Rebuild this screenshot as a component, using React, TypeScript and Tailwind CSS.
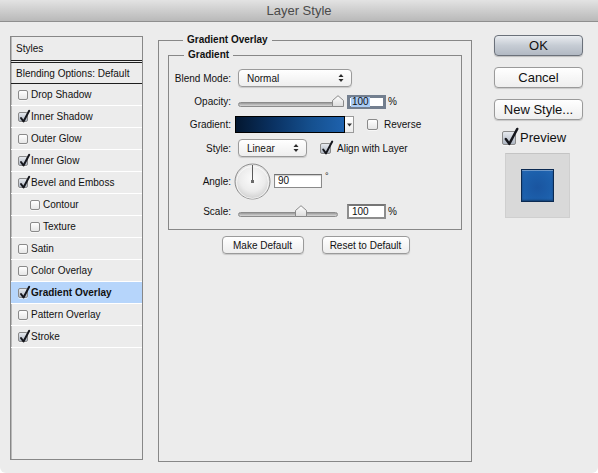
import React from "react";

function CheckMark({ size }: { size: number }) {
  const s = size;
  return (
    <svg
      className="absolute left-0 top-0 overflow-visible"
      width={s}
      height={s}
      viewBox={`0 0 ${s} ${s}`}
    >
      <path
        d={`M${s * 0.2} ${s * 0.5} L${s * 0.45} ${s * 0.85} L${s * 1.02} ${-s * 0.22}`}
        fill="none"
        stroke="#15161c"
        strokeWidth={s > 12 ? 2.4 : 2}
        strokeLinecap="round"
        strokeLinejoin="round"
      />
    </svg>
  );
}

function Box({ checked, size }: { checked: boolean; size: number }) {
  const base =
    "relative inline-block shrink-0 rounded-[2px] border border-[#8a8a8a] shadow-[0_1px_0_rgba(255,255,255,0.6)]";
  const fill = checked
    ? "bg-linear-to-b from-[#e6e9ee] to-[#aeb6c2] border-[#6f7580]"
    : "bg-linear-to-b from-[#ffffff] to-[#e6e6e6]";
  const dim =
    size === 10 ? "w-[10px] h-[10px]" : size === 11 ? "w-[11px] h-[11px]" : "w-[14px] h-[14px]";
  return (
    <span className={`${base} ${fill} ${dim}`}>
      {checked && <CheckMark size={size} />}
    </span>
  );
}

function UpDown() {
  return (
    <svg width="6" height="10" viewBox="0 0 6 10" className="shrink-0">
      <path d="M0.5 4 L3 1 L5.5 4 Z" fill="#2a2a2a" />
      <path d="M0.5 6 L3 9 L5.5 6 Z" fill="#2a2a2a" />
    </svg>
  );
}

function Popup({ text, w }: { text: string; w: "lg" | "sm" }) {
  return (
    <div
      className={`${w === "lg" ? "w-[114px]" : "w-[69px]"} h-[18px] ml-[7px] flex items-center justify-between pl-[8px] pr-[7px] rounded-[4px] border border-[#9a9a9a] bg-linear-to-b from-[#ffffff] to-[#eeeeee] shadow-[0_1px_1px_rgba(0,0,0,0.15)] text-[10px] text-[#111]`}
    >
      <span>{text}</span>
      <UpDown />
    </div>
  );
}

function Slider({ pos }: { pos: "end" | "mid" }) {
  return (
    <div className="relative ml-[7px] w-[100px] h-[15px] shrink-0">
      <div className="absolute left-0 right-0 top-[8px] h-[5px] rounded-full border border-[#8c8c8c] bg-linear-to-b from-[#9a9a9a] to-[#d8d8d8]" />
      <svg
        width="12"
        height="12"
        viewBox="0 0 12 12"
        className={`absolute top-[1px] ${pos === "end" ? "left-[94px]" : "left-[57px]"}`}
      >
        <defs>
          <linearGradient id={`th-${pos}`} x1="0" y1="0" x2="0" y2="1">
            <stop offset="0" stopColor="#ffffff" />
            <stop offset="1" stopColor="#dcdcdc" />
          </linearGradient>
        </defs>
        <path
          d="M0.5 11.5 L0.5 5.5 L6 0.7 L11.5 5.5 L11.5 11.5 Z"
          fill={`url(#th-${pos})`}
          stroke="#8a8a8a"
          strokeWidth="1"
        />
      </svg>
    </div>
  );
}

function Label({ children }: { children: React.ReactNode }) {
  return <div className="w-[62px] shrink-0 text-right text-[10px] text-[#111]">{children}</div>;
}

function Dial() {
  return (
    <svg width="37" height="37" viewBox="0 0 37 37" className="ml-[3px] shrink-0">
      <defs>
        <radialGradient id="dialg" cx="0.5" cy="0.42" r="0.6">
          <stop offset="0" stopColor="#fbfbfb" />
          <stop offset="0.6" stopColor="#ececec" />
          <stop offset="1" stopColor="#cdcdcd" />
        </radialGradient>
      </defs>
      <circle cx="18.5" cy="18.5" r="17.5" fill="url(#dialg)" stroke="#8e8e8e" strokeWidth="1" />
      <circle cx="18.5" cy="19.5" r="16" fill="none" stroke="rgba(255,255,255,0.7)" strokeWidth="1" />
      <line x1="18.5" y1="18.5" x2="18.5" y2="2" stroke="#5a5a5a" strokeWidth="1" />
      <rect x="17" y="17" width="3" height="3" fill="#6a6a6a" />
    </svg>
  );
}

const rows: { label: string; checked: boolean; indent?: boolean; selected?: boolean }[] = [
  { label: "Drop Shadow", checked: false },
  { label: "Inner Shadow", checked: true },
  { label: "Outer Glow", checked: false },
  { label: "Inner Glow", checked: true },
  { label: "Bevel and Emboss", checked: true },
  { label: "Contour", checked: false, indent: true },
  { label: "Texture", checked: false, indent: true },
  { label: "Satin", checked: false },
  { label: "Color Overlay", checked: false },
  { label: "Gradient Overlay", checked: true, selected: true },
  { label: "Pattern Overlay", checked: false },
  { label: "Stroke", checked: true },
];

export default function App() {
  return (
    <div className="w-[598px] h-[473px] bg-white font-['Liberation_Sans',Arial,sans-serif] text-[#111]">
      <div className="w-[598px] h-[473px] rounded-b-[6px] bg-[#ececec] flex flex-col overflow-hidden">
        {/* title bar */}
        <div className="h-[22px] shrink-0 border-b border-[#8f8f8f] bg-linear-to-b from-[#e3e3e3] to-[#b9b9b9] text-center text-[13px] leading-[21px] text-[#4a4a4a]">
          Layer Style
        </div>

        <div className="flex flex-row items-start">
          {/* left list */}
          <div className="ml-[10px] mt-[14px] w-[133px] h-[424px] shrink-0 border border-[#878787] shadow-[inset_1px_0_0_#b9b9b9] text-[10px]">
            <div className="h-[23px] flex items-center pl-[5px]">Styles</div>
            <div className="h-[3px] border-y border-[#1e1e1e]" />
            <div className="h-[21px] flex items-center pl-[5px] border-b border-[#1e1e1e]">
              Blending Options: Default
            </div>
            {rows.map((r) => (
              <div
                key={r.label}
                className={`h-[22px] flex items-center border-b border-white ${
                  r.indent ? "pl-[19px]" : "pl-[7px]"
                } ${r.selected ? "bg-[#b6d5fb] font-bold" : ""}`}
              >
                <Box checked={r.checked} size={10} />
                <span className="ml-[3px]">{r.label}</span>
              </div>
            ))}
          </div>

          {/* main */}
          <fieldset className="ml-[15px] mt-[12px] w-[313px] h-[428px] shrink-0 border border-[#878787] px-[9px] pt-[3px]">
            <legend className="ml-[15px] px-[4px] text-[10px] leading-[12px] font-bold">
              Gradient Overlay
            </legend>
            <fieldset className="w-[294px] border border-[#878787] pb-[10px]">
              <legend className="ml-[15px] px-[4px] text-[10px] leading-[12px] font-bold">
                Gradient
              </legend>

              <div className="mt-[8px] h-[18px] flex items-center">
                <Label>Blend Mode:</Label>
                <Popup text="Normal" w="lg" />
              </div>

              <div className="mt-[7px] h-[15px] flex items-center">
                <Label>Opacity:</Label>
                <Slider pos="end" />
                <div className="ml-[9px] w-[39px] h-[14px] border-[3px] border-[#737f8f] bg-white flex items-center pl-[1px]">
                  <span className="bg-[#a9cbf4] text-[10px] leading-[10px] px-[1px]">100</span>
                </div>
                <span className="ml-[2px] text-[10px]">%</span>
              </div>

              <div className="mt-[7px] h-[17px] flex items-center">
                <Label>Gradient:</Label>
                <div className="ml-[4px] w-[110px] h-[17px] border border-black bg-[linear-gradient(to_right,#031730,#0a3263_35%,#15508f_70%,#1e62ae)]" />
                <div className="w-[9px] h-[17px] border border-l-0 border-[#9a9a9a] bg-linear-to-b from-white to-[#ececec] flex items-center justify-center">
                  <svg width="5" height="4" viewBox="0 0 5 4">
                    <path d="M0 0.5 L5 0.5 L2.5 3.5 Z" fill="#333" />
                  </svg>
                </div>
                <span className="ml-[13px] flex">
                  <Box checked={false} size={11} />
                </span>
                <span className="ml-[6px] text-[10px]">Reverse</span>
              </div>

              <div className="mt-[6px] h-[18px] flex items-center">
                <Label>Style:</Label>
                <Popup text="Linear" w="sm" />
                <span className="ml-[13px] flex">
                  <Box checked={true} size={11} />
                </span>
                <span className="ml-[6px] text-[10px]">Align with Layer</span>
              </div>

              <div className="mt-[6px] h-[36px] flex items-center">
                <Label>Angle:</Label>
                <Dial />
                <div className="ml-[3px] w-[48px] h-[14px] border border-[#8a8a8a] border-t-[#6f6f6f] bg-white shadow-[inset_0_1px_1px_rgba(0,0,0,0.2)] text-[10px] leading-[12px] pl-[3px]">
                  90
                </div>
                <span className="ml-[3px] self-start mt-[8px] text-[9px] leading-[10px]">°</span>
              </div>

              <div className="mt-[5px] h-[15px] flex items-center">
                <Label>Scale:</Label>
                <Slider pos="mid" />
                <div className="ml-[9px] w-[39px] h-[15px] border-2 border-[#8d8d8d] border-t-[#767676] bg-white text-[10px] leading-[11px] pl-[3px]">
                  100
                </div>
                <span className="ml-[2px] text-[10px]">%</span>
              </div>
            </fieldset>

            <div className="mt-[6px] flex justify-center gap-[18px] pl-[1px]">
              <div className="w-[82px] h-[18px] rounded-[4px] border border-[#9a9a9a] bg-linear-to-b from-white to-[#ededed] shadow-[0_1px_1px_rgba(0,0,0,0.15)] flex items-center justify-center text-[10px]">
                Make Default
              </div>
              <div className="w-[88px] h-[18px] rounded-[4px] border border-[#9a9a9a] bg-linear-to-b from-white to-[#ededed] shadow-[0_1px_1px_rgba(0,0,0,0.15)] flex items-center justify-center text-[10px]">
                Reset to Default
              </div>
            </div>
          </fieldset>

          {/* right column */}
          <div className="ml-[22px] mt-[13px] w-[89px] shrink-0 flex flex-col">
            <div className="h-[21px] rounded-[4px] border border-[#6b717a] bg-linear-to-b from-[#e9ecf0] via-[#c6ccd4] to-[#b2b9c3] shadow-[0_1px_1px_rgba(0,0,0,0.2)] flex items-center justify-center text-[13px]">
              OK
            </div>
            <div className="mt-[11px] h-[21px] rounded-[4px] border border-[#9a9a9a] bg-linear-to-b from-white to-[#eeeeee] shadow-[0_1px_1px_rgba(0,0,0,0.15)] flex items-center justify-center text-[13px]">
              Cancel
            </div>
            <div className="mt-[11px] h-[21px] rounded-[4px] border border-[#9a9a9a] bg-linear-to-b from-white to-[#eeeeee] shadow-[0_1px_1px_rgba(0,0,0,0.15)] flex items-center justify-center text-[13px]">
              New Style...
            </div>
            <div className="mt-[11px] h-[14px] flex items-center ml-[8px]">
              <Box checked={true} size={14} />
              <span className="ml-[4px] text-[13px]">Preview</span>
            </div>
            <div className="mt-[8px] ml-[11px] w-[65px] h-[65px] bg-[#d9d9d9] border border-[#cfcfcf] border-t-[#c4c4c4] flex items-center justify-center">
              <div className="w-[33px] h-[33px] border border-[#0b2a52] bg-[radial-gradient(circle_at_50%_55%,#1a55a0,#1c5fab_60%,#2467b3)] shadow-[inset_0_1px_0_rgba(255,255,255,0.35),inset_0_-1px_2px_rgba(0,0,0,0.35)]" />
            </div>
          </div>
        </div>
      </div>
    </div>
  );
}
